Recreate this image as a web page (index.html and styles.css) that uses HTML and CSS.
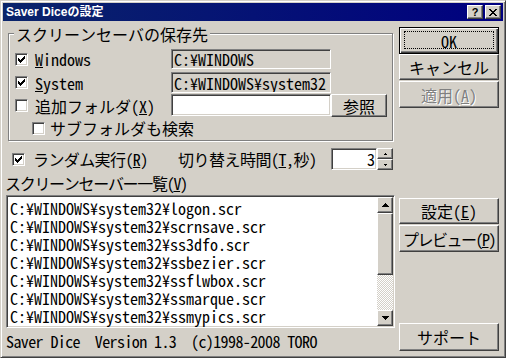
FILE: index.html
```html
<!DOCTYPE html>
<html lang="ja">
<head>
    <meta charset="UTF-8">
    <meta name="viewport" content="width=device-width, initial-scale=1.0">
    <title>Saver Diceの設定</title>
    <link rel="stylesheet" href="styles.css">
</head>
<body>
    <!-- segni di spunta e frecce riutilizzati -->
    <svg class="defs" width="0" height="0">
        <symbol id="chk" viewBox="0 0 11 11">
            <path d="M8 2h1v1h-1zM7 3h2v1h-2zM2 4h1v1h-1zM6 4h3v1h-3zM2 5h2v1h-2zM5 5h3v1h-3zM2 6h5v1h-5zM3 7h3v1h-3zM4 8h1v1h-1z"/>
        </symbol>
        <symbol id="up" viewBox="0 0 7 4">
            <path d="M3 0h1v1h-1zM2 1h3v1h-3zM1 2h5v1h-5zM0 3h7v1h-7z"/>
        </symbol>
        <symbol id="down" viewBox="0 0 7 4">
            <path d="M0 0h7v1h-7zM1 1h5v1h-5zM2 2h3v1h-3zM3 3h1v1h-1z"/>
        </symbol>
    </svg>

    <div class="window">
        <div class="titlebar">
            <span class="title">Saver Diceの設定</span>
            <span class="tbtn help">?</span>
            <span class="tbtn">
                <svg width="8" height="7" viewBox="0 0 8 7"><path d="M0 0h2v1h-2zM6 0h2v1h-2zM1 1h2v1h-2zM5 1h2v1h-2zM2 2h4v1h-4zM3 3h2v1h-2zM2 4h4v1h-4zM1 5h2v1h-2zM5 5h2v1h-2zM0 6h2v1h-2zM6 6h2v1h-2z"/></svg>
            </span>
        </div>

        <div class="client">
            <div class="left">
                <div class="group">
                    <span class="group-title">スクリーンセーバの保存先</span>

                    <div class="grow r1">
                        <label class="check"><span class="box"><svg><use href="#chk"/></svg></span><span><u>W</u>indows</span></label>
                        <div class="field">C:¥WINDOWS</div>
                    </div>
                    <div class="grow r2">
                        <label class="check"><span class="box"><svg><use href="#chk"/></svg></span><span><u>S</u>ystem</span></label>
                        <div class="field clip">C:¥WINDOWS¥system32</div>
                    </div>
                    <div class="grow r3">
                        <label class="check"><span class="box"></span><span>追加フォルダ(<u>X</u>)</span></label>
                        <div class="field white"></div>
                        <div class="btn browse">参照</div>
                    </div>
                    <div class="grow r4">
                        <label class="check"><span class="box"></span><span>サブフォルダも検索</span></label>
                    </div>
                </div>

                <div class="opts">
                    <label class="check random"><span class="box"><svg><use href="#chk"/></svg></span><span>ランダム実行(<u>R</u>)</span></label>
                    <span class="interval">切り替え時間(<u>T</u>,秒)</span>
                    <div class="spin">
                        <div class="spin-edit">3</div>
                        <div class="spin-btns">
                            <div class="sbtn"><svg width="3" height="2" viewBox="0 0 3 2"><path d="M1 0h1v1h-1zM0 1h3v1h-3z"/></svg></div>
                            <div class="sbtn"><svg width="3" height="2" viewBox="0 0 3 2"><path d="M0 0h3v1h-3zM1 1h1v1h-1z"/></svg></div>
                        </div>
                    </div>
                </div>

                <div class="list-label">スクリーンセーバー一覧(<u>V</u>)</div>
                <div class="list">
                    <div class="items">
                        <div>C:¥WINDOWS¥system32¥logon.scr</div>
                        <div>C:¥WINDOWS¥system32¥scrnsave.scr</div>
                        <div>C:¥WINDOWS¥system32¥ss3dfo.scr</div>
                        <div>C:¥WINDOWS¥system32¥ssbezier.scr</div>
                        <div>C:¥WINDOWS¥system32¥ssflwbox.scr</div>
                        <div>C:¥WINDOWS¥system32¥ssmarque.scr</div>
                        <div>C:¥WINDOWS¥system32¥ssmypics.scr</div>
                    </div>
                    <div class="scrollbar">
                        <div class="btn arrow"><svg width="7" height="4"><use href="#up"/></svg></div>
                        <div class="btn thumb"></div>
                        <div class="track"></div>
                        <div class="btn arrow"><svg width="7" height="4"><use href="#down"/></svg></div>
                    </div>
                </div>
                <div class="footer">Saver Dice  Version 1.3  (c)1998-2008 TORO</div>
            </div>

            <div class="right">
                <div class="btn ok">OK</div>
                <div class="btn cancel">キャンセル</div>
                <div class="btn apply disabled">適用(<u>A</u>)</div>
                <div class="btn setup">設定(<u>E</u>)</div>
                <div class="btn preview">プレビュー(<u>P</u>)</div>
                <div class="btn support">サポート</div>
            </div>
        </div>
    </div>
</body>
</html>
```

FILE: styles.css
```css
* {
    box-sizing: border-box;
}

body {
    margin: 0;
    background: #d4d0c8;
    color: #000;
    font-family: "Noto Sans Mono CJK JP", "Noto Sans CJK JP", monospace;
    font-size: 16px;
    line-height: 18px;
}

.defs {
    position: absolute;
}

u {
    text-decoration-thickness: 1px;
    text-underline-offset: 1px;
}

/* finestra con bordo in rilievo */
.window {
    width: 506px;
    height: 358px;
    border: 1px solid;
    border-color: #d4d0c8 #404040 #404040 #d4d0c8;
    box-shadow: inset 1px 1px #fff, inset -1px -1px #808080;
    padding: 2px;
}

.titlebar {
    height: 18px;
    display: flex;
    align-items: center;
    padding: 0 2px 0 3px;
    background: linear-gradient(to right, #0a246a, #000080);
}

.title {
    color: #fff;
    font-family: "Liberation Sans", "Noto Sans CJK JP", sans-serif;
    font-weight: bold;
    font-size: 12px;
}

.tbtn {
    width: 16px;
    height: 14px;
    display: flex;
    align-items: center;
    justify-content: center;
    background: #d4d0c8;
    border: 1px solid;
    border-color: #fff #404040 #404040 #fff;
    box-shadow: inset -1px -1px #808080;
    font-family: "Liberation Sans", sans-serif;
    font-weight: bold;
    font-size: 11px;
    line-height: 12px;
}

.tbtn.help {
    margin-left: auto;
    margin-right: 2px;
}

.client {
    display: flex;
    gap: 4px;
    padding: 0 4px 0 3px;
}

.left {
    width: 389px;
}

/* riquadro inciso */
.group {
    position: relative;
    margin: 12px 0 0 2px;
    width: 385px;
    height: 108px;
    border: 1px solid #808080;
    box-shadow: inset 1px 1px #fff, 1px 1px #fff;
    padding: 15px 0 0 6px;
}

.group-title {
    position: absolute;
    top: -9px;
    left: 5px;
    padding: 0 2px;
    background: #d4d0c8;
}

.grow {
    display: flex;
    align-items: center;
}

.r1 { height: 20px; }
.r2 { height: 21px; margin-top: 3px; }
.r3 { height: 23px; margin-top: 1px; }
.r4 { height: 20px; margin-top: 1px; padding-left: 17px; }

.check {
    display: flex;
    align-items: center;
    gap: 7px;
    width: 156px;
    white-space: nowrap;
}

.r4 .check {
    gap: 5px;
}

.box {
    width: 13px;
    height: 13px;
    flex: none;
    border: 1px solid;
    border-color: #808080 #fff #fff #808080;
    box-shadow: inset 1px 1px #404040, inset -1px -1px #d4d0c8;
    background: #fff;
}

.box svg {
    display: block;
    width: 11px;
    height: 11px;
    shape-rendering: crispEdges;
}

.field {
    width: 160px;
    height: 100%;
    border: 1px solid;
    border-color: #808080 #fff #fff #808080;
    box-shadow: inset 1px 1px #404040, inset -1px -1px #d4d0c8;
    padding: 0 1px 0 2px;
    display: flex;
    align-items: center;
    white-space: nowrap;
}

.field.clip {
    overflow: hidden;
}

.r3 .field {
    height: 22px;
    align-self: flex-start;
}

.field.white {
    background: #fff;
}

/* pulsanti classici */
.btn {
    display: flex;
    align-items: center;
    justify-content: center;
    background: #d4d0c8;
    border: 1px solid;
    border-color: #fff #404040 #404040 #fff;
    box-shadow: inset -1px -1px #808080;
    white-space: nowrap;
}

.browse {
    width: 56px;
    height: 23px;
}

.opts {
    display: flex;
    align-items: center;
    height: 22px;
    margin-top: 7px;
}

.check.random {
    width: 172px;
    padding-left: 6px;
    gap: 8px;
    letter-spacing: -0.6px;
}

.interval {
    width: 153px;
    white-space: nowrap;
    letter-spacing: -0.5px;
}

.spin {
    display: flex;
}

.spin-edit {
    width: 46px;
    height: 22px;
    background: #fff;
    border: 1px solid;
    border-color: #808080 #fff #fff #808080;
    box-shadow: inset 1px 1px #404040, inset -1px -1px #d4d0c8;
    text-align: right;
    padding: 1px 1px 0 0;
}

.spin-btns {
    width: 16px;
}

.sbtn {
    height: 11px;
    display: flex;
    align-items: center;
    justify-content: center;
    border: 1px solid;
    border-color: #fff #404040 #404040 #fff;
    box-shadow: inset -1px -1px #808080;
}

.sbtn svg,
.arrow svg {
    display: block;
    shape-rendering: crispEdges;
}

.list-label {
    margin-top: 3px;
    line-height: 20px;
    margin-left: -1px;
    letter-spacing: -1.3px;
}

.list {
    display: flex;
    height: 133px;
    margin-top: 2px;
    border: 1px solid;
    border-color: #808080 #fff #fff #808080;
    box-shadow: inset 1px 1px #404040, inset -1px -1px #d4d0c8;
    padding: 1px;
    background: #fff;
}

.items {
    flex: 1;
    padding: 2px 0 0 2px;
    white-space: nowrap;
}

.scrollbar {
    width: 16px;
    display: flex;
    flex-direction: column;
}

.arrow {
    height: 16px;
}

.thumb {
    height: 62px;
}

.track {
    flex: 1;
    background: repeating-conic-gradient(#d4d0c8 0 25%, #fff 0 50%) 0 0 / 2px 2px;
}

.footer {
    margin-top: 3px;
    line-height: 20px;
    white-space: pre;
    letter-spacing: -0.6px;
}

.right {
    width: 100px;
    display: flex;
    flex-direction: column;
}

.ok {
    position: relative;
    margin-top: 6px;
    height: 27px;
    border: 1px solid #000;
    box-shadow: inset 1px 1px #fff, inset -1px -1px #404040, inset -2px -2px #808080;
}

/* rettangolo di focus tratteggiato */
.ok::after {
    content: "";
    position: absolute;
    inset: 3px 4px 4px 4px;
    border: 1px dotted #000;
}

.cancel {
    height: 26px;
}

.apply {
    height: 27px;
    margin-top: 1px;
}

.disabled {
    color: #808080;
    text-shadow: 1px 1px #fff;
}

.setup {
    height: 26px;
    margin-top: 90px;
}

.preview {
    height: 27px;
    margin-top: 1px;
    letter-spacing: -1.5px;
}

.support {
    height: 28px;
    margin-top: 71px;
}
```
